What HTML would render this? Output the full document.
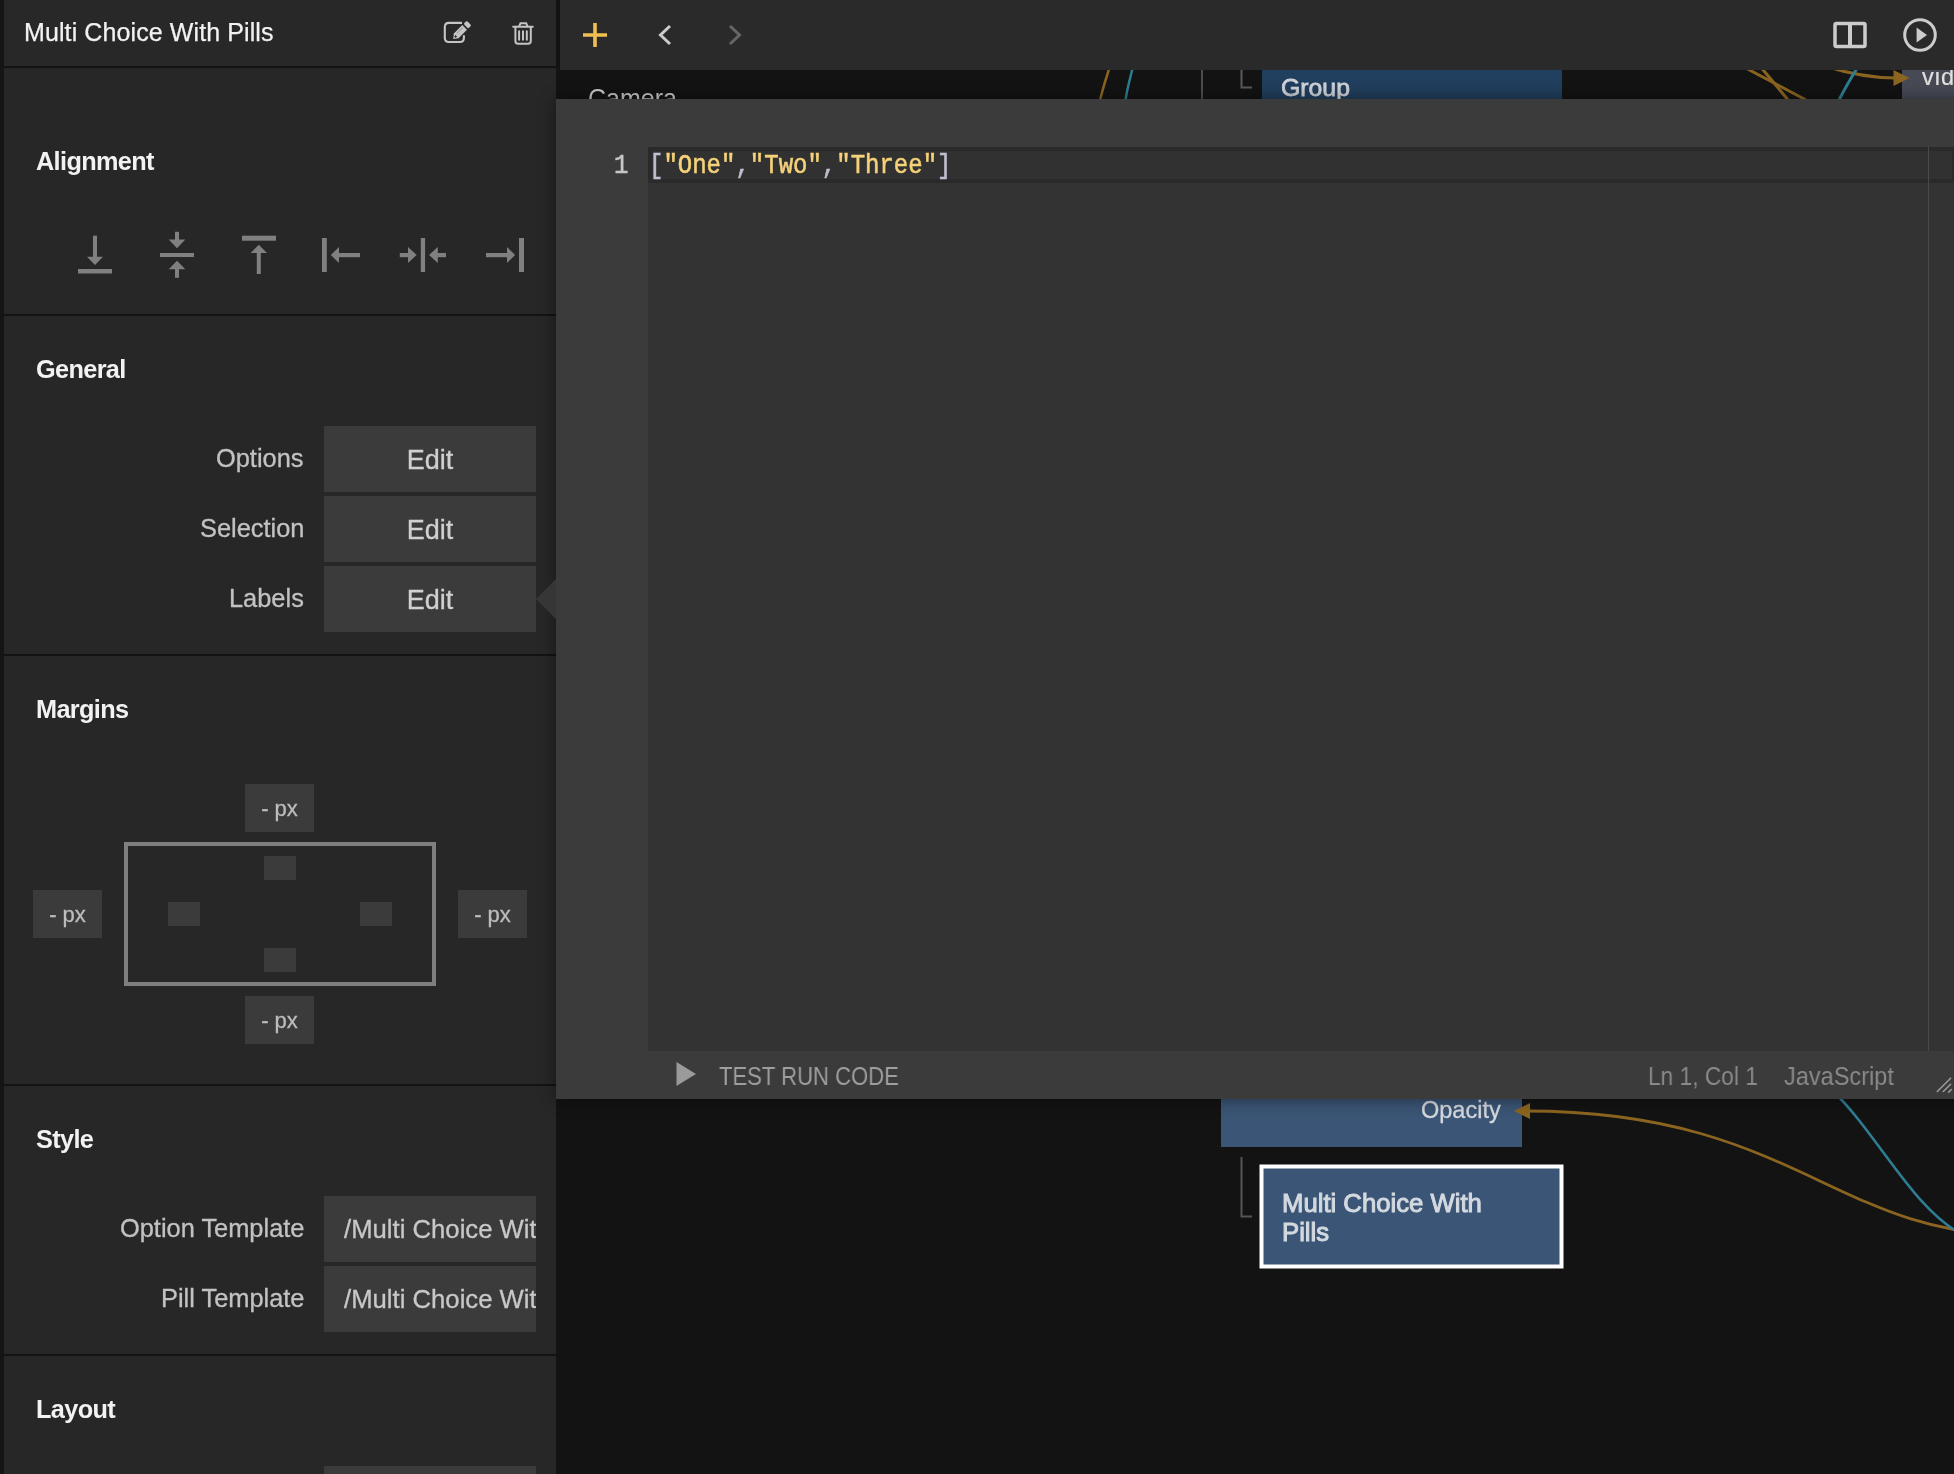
<!DOCTYPE html>
<html><head><meta charset="utf-8">
<style>
html,body{margin:0;padding:0;width:1954px;height:1474px;overflow:hidden;background:#131313;font-family:"Liberation Sans",sans-serif;}
.a{position:absolute;}
.t{position:absolute;white-space:pre;line-height:25px;}
#strip{left:0;top:0;width:4px;height:1474px;background:#151515;}
#panel{left:4px;top:0;width:552px;height:1474px;background:#272727;}
#hdr{left:4px;top:0;width:552px;height:66px;background:#282828;}
.bd{position:absolute;left:4px;width:552px;height:2px;background:#131313;}
.hd{position:absolute;left:36px;white-space:pre;line-height:25px;font-weight:bold;font-size:25.3px;letter-spacing:-0.65px;color:#f2f2f2;}
.lb{position:absolute;right:1650px;white-space:pre;line-height:25px;font-size:25.4px;color:#c2c2c2;text-align:right;}
.btn{position:absolute;left:324px;width:212px;height:66px;background:#3b3b3b;}
.btn span{position:absolute;left:0;right:0;top:22.2px;text-align:center;font-size:27px;color:#d0d0d0;line-height:25px;white-space:pre;}
.fld{position:absolute;left:324px;width:212px;height:65.5px;background:#3b3b3b;overflow:hidden;}
.fld span{position:absolute;left:19.5px;top:20.8px;font-size:25.7px;color:#c8c8c8;line-height:25px;white-space:pre;}
.px{position:absolute;width:69px;height:48px;background:#3b3b3b;}
.px span{position:absolute;left:0;right:0;text-align:center;font-size:22px;color:#bdbdbd;line-height:22px;top:13.5px;white-space:pre;}
.sq{position:absolute;width:32px;height:24px;background:#3b3b3b;}
#toolbar{left:560px;top:0;width:1394px;height:70px;background:#2a2a2a;}
#popup{left:556px;top:99px;width:1420px;height:1000px;background:#3b3b3b;box-shadow:0 0 16px rgba(0,0,0,0.45);}
#code{left:648px;top:147px;width:1306px;height:904px;background:#333333;}
#curline{left:648px;top:147px;width:1300px;height:28px;border:4px solid #2a2a2a;background:#313131;}
.mono{font-family:"Liberation Mono",monospace;}
.t,.lb,.hd,.btn span,.fld span,.px span{will-change:transform;}
.lb,.btn span,.fld span,.px span{-webkit-text-stroke:0.3px currentColor;}
</style></head><body>
<!-- ============ CANVAS ============ -->
<svg class="a" style="left:0;top:0" width="1954" height="1474" viewBox="0 0 1954 1474">
  <!-- top strip nodes (mostly hidden under popup) -->
  <rect x="1262" y="60" width="300" height="60" fill="#213f5e"/>
  <rect x="1902" y="60" width="60" height="60" fill="#474a55"/>
  <rect x="1201" y="60" width="2" height="60" fill="#4d4d4d"/>
  <path d="M1241.5 60 V87.5 H1252" fill="none" stroke="#5a5a5a" stroke-width="2"/>
  <path d="M1112 60 Q1104 84 1100 100" stroke="#8b6520" stroke-width="2.5" fill="none"/>
  <path d="M1135 60 Q1128 84 1125.5 100" stroke="#2e7d93" stroke-width="2.5" fill="none"/>
  <path d="M1740 65 L1808 101" stroke="#8b6520" stroke-width="3" fill="none"/>
  <path d="M1759 65 L1789 101" stroke="#8b6520" stroke-width="3" fill="none"/>
  <path d="M1825 66 C1850 74 1870 78 1896 78" stroke="#8b6520" stroke-width="3" fill="none"/>
  <path d="M1893.5 70 L1909.5 78 L1893.5 86 Z" fill="#8b6520"/>
  <path d="M1861 62 C1852 76 1845 88 1838 102" stroke="#2e7d93" stroke-width="3" fill="none"/>
  <!-- bottom nodes -->
  <rect x="1221" y="1080" width="301" height="67" fill="#3a5575"/>
  <path d="M1241.5 1157 V1216.5 H1252" fill="none" stroke="#555" stroke-width="2"/>
  <rect x="1261.5" y="1166.5" width="300" height="100" fill="#3a5575" stroke="#ffffff" stroke-width="4"/>
  <path d="M1526 1111 C1792 1111 1834.7 1235.2 2018.5 1235.2" stroke="#8b6520" stroke-width="2.8" fill="none"/>
  <path d="M1514 1111 L1530 1103 L1530 1119 Z" fill="#8b6520"/>
  <path d="M1832 1090 C1878.4 1134.6 1914.1 1211.7 1965 1236" stroke="#2e7d93" stroke-width="2.6" fill="none"/>
</svg>
<div class="t" style="left:588px;top:86px;font-size:25px;color:#c8c8c8">Camera</div>
<div class="t" style="left:1281px;top:75px;font-size:24.8px;color:#d0d4da;-webkit-text-stroke:0.8px #d0d4da">Group</div>
<div class="t" style="left:1921.5px;top:64.5px;font-size:23.5px;letter-spacing:1px;color:#e0e0e0;-webkit-text-stroke:0.2px #e0e0e0">video</div>
<div class="t" style="left:1421px;top:1097.5px;font-size:23.5px;color:#d5d8de;-webkit-text-stroke:0.3px #d5d8de">Opacity</div>
<div class="t" style="left:1281.5px;top:1188.7px;font-size:25.7px;color:#d4d9e0;line-height:28.5px;-webkit-text-stroke:1px #d4d9e0">Multi Choice With
Pills</div>

<!-- ============ TOOLBAR ============ -->
<div class="a" id="toolbar"></div>
<svg class="a" style="left:0;top:0" width="1954" height="70" viewBox="0 0 1954 70">
  <path d="M595 23 V47 M583 35 H607" stroke="#f0bf50" stroke-width="3.6" fill="none"/>
  <path d="M670 26 L660.5 35 L670 44" stroke="#cccccc" stroke-width="3" fill="none"/>
  <path d="M730 26 L739.5 35 L730 44" stroke="#666666" stroke-width="3" fill="none"/>
  <rect x="1835" y="23.5" width="30" height="23" rx="1.5" fill="none" stroke="#cccccc" stroke-width="3.5"/>
  <rect x="1848" y="23.5" width="4" height="23" fill="#cccccc"/>
  <circle cx="1920" cy="35" r="15.3" fill="none" stroke="#cccccc" stroke-width="3"/>
  <path d="M1916.6 27.6 L1927 35 L1916.6 42.6 Z" fill="#cccccc"/>
</svg>

<!-- ============ LEFT PANEL ============ -->
<div class="a" id="strip"></div>
<div class="a" id="panel"></div>
<div class="a" id="hdr"></div>
<div class="bd" style="top:66px"></div>
<div class="t" style="left:24px;top:20px;font-size:25px;color:#f2f2f2;letter-spacing:0.1px;-webkit-text-stroke:0.25px #f2f2f2">Multi Choice With Pills</div>
<svg class="a" style="left:0;top:0" width="556" height="1474" viewBox="0 0 556 1474">
  <!-- edit icon -->
  <path d="M462 22.9 H449 Q444.8 22.9 444.8 27 V38 Q444.8 42 449 42 H460 Q463.9 42 463.9 38 V35.3" fill="none" stroke="#c4c4c4" stroke-width="2.1"/>
  <g transform="translate(453.2 38.9) rotate(-45)">
    <path d="M0 0 L4.2 -3.3 H16.2 V3.3 H4.2 Z" fill="#c4c4c4"/>
    <rect x="17.9" y="-3.3" width="4.5" height="6.6" rx="1.2" fill="#c4c4c4"/>
    <path d="M6.5 -1.2 H14.5" stroke="#7a7a7a" stroke-width="0.7"/>
    <path d="M2.6 -0.9 L4.2 0.9 M2.6 0.9 L4.2 -0.9" stroke="#2a2a2a" stroke-width="1"/>
  </g>
  <!-- trash icon -->
  <path d="M513.2 26.8 H532.7" stroke="#c4c4c4" stroke-width="2.1" stroke-linecap="round"/>
  <path d="M518.9 26.8 L520.5 23.3 H526.2 L527.7 26.8" fill="none" stroke="#c4c4c4" stroke-width="2"/>
  <path d="M515.4 27 V41 Q515.4 43.8 518.2 43.8 H528 Q530.8 43.8 530.8 41 V27" fill="none" stroke="#c4c4c4" stroke-width="2"/>
  <path d="M519.1 31.2 V39.8 M523 31.2 V39.8 M526.8 31.2 V39.8" stroke="#c4c4c4" stroke-width="2" stroke-linecap="round"/>
  <!-- alignment icons -->
  <g fill="#808080">
    <rect x="78" y="269" width="34" height="4.5"/>
    <rect x="93" y="235.7" width="4" height="22"/>
    <path d="M87 256.8 H103 L95 265 Z"/>
    <rect x="160" y="253" width="34" height="4"/>
    <rect x="175" y="231.8" width="4" height="9"/>
    <path d="M168.7 239.6 H185.3 L177 248.2 Z"/>
    <path d="M168.7 269.3 H185.3 L177 260.7 Z"/>
    <rect x="175" y="268.5" width="4" height="9.3"/>
    <rect x="242" y="235.7" width="34" height="5"/>
    <path d="M250.7 252.9 H267 L258.8 244.8 Z"/>
    <rect x="256.8" y="252" width="4" height="22"/>
    <rect x="322" y="238" width="4.8" height="34"/>
    <path d="M339 247 V263 L330.8 255 Z"/>
    <rect x="338.5" y="253" width="21.5" height="4.2"/>
    <rect x="420.8" y="238" width="4.3" height="34"/>
    <rect x="399.8" y="253" width="8.7" height="4.2"/>
    <path d="M408 247 V263 L416.6 255 Z"/>
    <path d="M437.8 247 V263 L429 255 Z"/>
    <rect x="437.3" y="253" width="8.7" height="4.2"/>
    <rect x="486" y="253" width="21.5" height="4.2"/>
    <path d="M507 247 V263 L515.1 255 Z"/>
    <rect x="519" y="238" width="5" height="34"/>
  </g>
  <!-- margins rect -->
  <rect x="126" y="844" width="308" height="140" fill="none" stroke="#7f7f7f" stroke-width="4"/>
</svg>
<div class="hd" style="top:149px">Alignment</div>
<div class="bd" style="top:314px"></div>
<div class="hd" style="top:357px">General</div>
<div class="lb" style="top:446.2px">Options</div>
<div class="btn" style="top:426px"><span>Edit</span></div>
<div class="lb" style="top:516px">Selection</div>
<div class="btn" style="top:496px"><span>Edit</span></div>
<div class="lb" style="top:586.2px">Labels</div>
<div class="btn" style="top:566px"><span>Edit</span></div>
<div class="bd" style="top:654px"></div>
<div class="hd" style="top:697px">Margins</div>
<div class="px" style="left:245px;top:784px"><span>- px</span></div>
<div class="px" style="left:33px;top:890px"><span>- px</span></div>
<div class="px" style="left:458px;top:890px"><span>- px</span></div>
<div class="px" style="left:245px;top:996px"><span>- px</span></div>
<div class="sq" style="left:264px;top:856px"></div>
<div class="sq" style="left:168px;top:902px"></div>
<div class="sq" style="left:360px;top:902px"></div>
<div class="sq" style="left:264px;top:948px"></div>
<div class="bd" style="top:1084px"></div>
<div class="hd" style="top:1127px">Style</div>
<div class="lb" style="top:1216px">Option Template</div>
<div class="fld" style="top:1196px"><span>/Multi Choice With Pills/Option</span></div>
<div class="lb" style="top:1286px">Pill Template</div>
<div class="fld" style="top:1266px"><span>/Multi Choice With Pills/Pill</span></div>
<div class="bd" style="top:1354px"></div>
<div class="hd" style="top:1397px">Layout</div>
<div class="fld" style="top:1466px"></div>

<!-- ============ POPUP ============ -->
<div class="a" id="popup"></div>
<svg class="a" style="left:536px;top:579px" width="20" height="40" viewBox="0 0 20 40"><path d="M20 0 L0 20 L20 40 Z" fill="#363636"/></svg>
<div class="a" id="code"></div>
<div class="a" id="curline"></div>
<div class="a" style="left:1928px;top:147px;width:1px;height:904px;background:#4a4a4a"></div>
<div class="t mono" style="left:613.5px;top:152px;font-size:24px;color:#c6c6c6;transform:scaleY(1.125);transform-origin:0 3px;-webkit-text-stroke:0.5px #c6c6c6">1</div>
<div class="t mono" style="left:648.6px;top:152px;font-size:24px;color:#c0bfd0;transform:scaleY(1.125);transform-origin:0 3px;-webkit-text-stroke:0.5px">[<span style="color:#f5d27a">"One"</span>,<span style="color:#f5d27a">"Two"</span>,<span style="color:#f5d27a">"Three"</span>]</div>
<svg class="a" style="left:556px;top:1051px" width="1398" height="48" viewBox="556 1051 1398 48">
  <path d="M676.5 1062 L696 1074 L676.5 1086 Z" fill="#9a9a9a"/>
  <path d="M1937.3 1091.5 L1950.6 1078.2 M1943.3 1091.5 L1950.6 1084.3 M1948.6 1092.2 L1951.2 1089.6" stroke="#9a9a9a" stroke-width="1.6" stroke-linecap="round"/>
</svg>
<div class="t" style="left:719px;top:1064px;font-size:25.5px;color:#9e9e9e;transform:scaleX(0.866);transform-origin:0 0">TEST RUN CODE</div>
<div class="t" style="left:1648px;top:1064px;font-size:25.4px;color:#8a8a8a;transform:scaleX(0.895);transform-origin:0 0">Ln 1, Col 1</div>
<div class="t" style="left:1784px;top:1064px;font-size:25.4px;color:#8a8a8a;transform:scaleX(0.927);transform-origin:0 0">JavaScript</div>
</body></html>
